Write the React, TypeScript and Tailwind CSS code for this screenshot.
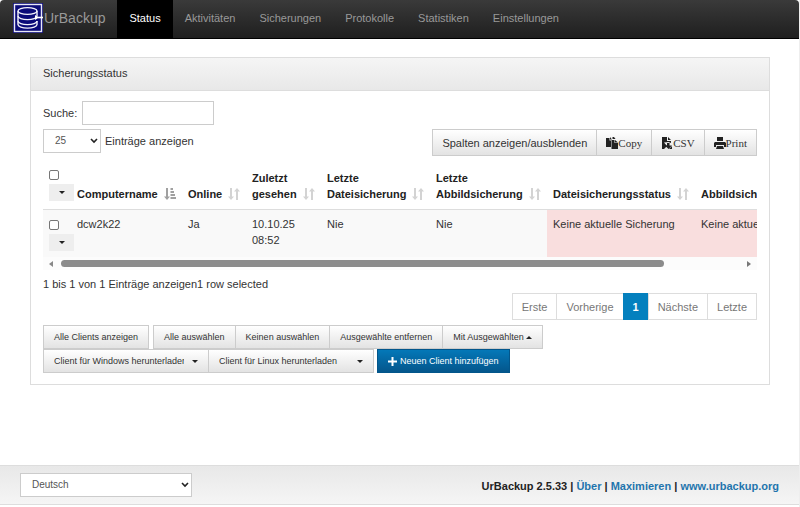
import type { ReactNode } from "react";

const navItems = ["Status", "Aktivitäten", "Sicherungen", "Protokolle", "Statistiken", "Einstellungen"];

const columns = [
  { label: "Computername", cell: "dcw2k22", width: "w-[111px]" },
  { label: "Online", cell: "Ja", width: "w-[64px]" },
  { label: "Zuletzt gesehen", cell: "10.10.25 08:52", width: "w-[75px]" },
  { label: "Letzte Dateisicherung", cell: "Nie", width: "w-[109px]" },
  { label: "Letzte Abbildsicherung", cell: "Nie", width: "w-[117px]" },
  { label: "Dateisicherungsstatus", cell: "Keine aktuelle Sicherung", width: "w-[148px]", alert: true },
  { label: "Abbildsicherungsstatus", cell: "Keine aktuelle Sicherung", width: "w-[152px]", alert: true },
];

function Logo() {
  return (
    <svg viewBox="0 0 30 30" className="size-[30px]" aria-hidden="true">
      <rect width="30" height="30" fill="#0b0b78" />
      <rect x="1.5" y="1.5" width="27" height="27" fill="none" stroke="#e8e8f4" strokeWidth="1.4" />
      <g fill="none" stroke="#f2f2fa" strokeWidth="1.4">
        <ellipse cx="14.5" cy="8" rx="9.5" ry="3.4" />
        <path d="M5 8v5c0 2 4.300 3.600 9.500 3.600S24 15 24 13V8" />
        <path d="M5 13v5c0 2 4.300 3.600 9.500 3.600S24 20 24 18" />
        <path d="M5 18v3.500c0 2 4.300 3.600 9.500 3.600S24 23.500 24 21.500V18" />
      </g>
      <path d="M22 12v5l4-2.500z" fill="#fff" />
      <path d="M25 14.500h5" stroke="#fff" strokeWidth="1.6" />
    </svg>
  );
}

function SortIcon() {
  return (
    <svg viewBox="0 0 12 12" className="size-3 shrink-0 fill-[#d3d3d3]" aria-hidden="true">
      <path d="M2 0h2v8.500h2L3 12 0 8.500h2zM8 12h2V3.500h2L9 0 6 3.500h2z" />
    </svg>
  );
}

function SortedIcon() {
  return (
    <svg viewBox="0 0 12 12" className="size-3 shrink-0 fill-[#a0a0a0]" aria-hidden="true">
      <path d="M2 0h2v8.500h2L3 12 0 8.500h2zM6.500 0H9v2H6.500zM6.500 3H10v2H6.500zM6.500 6H11v2H6.500zM6.500 9H12v2H6.500z" />
    </svg>
  );
}

function Chevron() {
  return (
    <svg viewBox="0 0 8 6" className="pointer-events-none absolute right-[3px] top-1/2 h-[6px] w-2 -translate-y-1/2" aria-hidden="true">
      <path d="M1 1l3 3 3-3" fill="none" stroke="#222" strokeWidth="1.6" />
    </svg>
  );
}

function Caret({ up = false }: { up?: boolean }) {
  return (
    <svg viewBox="0 0 6 3" className="h-[3px] w-[6px] shrink-0 fill-[#222]" aria-hidden="true">
      <path d={up ? "M0 3L3 0l3 3z" : "M0 0h6L3 3z"} />
    </svg>
  );
}

function CopyIcon() {
  return (
    <svg viewBox="0 0 12 12" className="size-3 fill-[#222]" aria-hidden="true">
      <path d="M0 1h3.500v2.500H5V10H0zM4 0l2 2.500H4z" />
      <path d="M5.500 3h3v3H12v6H5.500zM9 3l3 2.500H9zM6.500 0H8l1.500 2h-3z" />
    </svg>
  );
}

function CsvIcon() {
  return (
    <svg viewBox="0 0 12 12" className="size-3 fill-[#222]" aria-hidden="true">
      <path d="M1 0h5v4h4v2L7.500 5 3 5.500 6 9 3 12H1zM7 0l3 3H7z" />
      <path d="M6 6h2.500v2.500H11L7.500 12 4 8.500h2z" />
      <path d="M9 11l2-2v3H8z" />
    </svg>
  );
}

function PrintIcon() {
  return (
    <svg viewBox="0 0 12 12" className="size-3 fill-[#222]" aria-hidden="true">
      <path d="M3 0h6v4H3zM1 5h10l1 1v4h-2V8H2v2H0V6zM3 9h6l1 3H2z" />
    </svg>
  );
}

function ExportButton({ icon, children }: { icon: ReactNode; children: ReactNode }) {
  return (
    <button className="-ml-px flex h-[27px] items-center border border-[#ccc] bg-linear-to-b from-white to-[#e3e3e3] px-[9px] font-['Liberation_Serif',serif]">
      {icon}
      {children}
    </button>
  );
}

function SmallButton({ children }: { children: ReactNode }) {
  return (
    <button className="-ml-px flex h-6 items-center gap-[2px] whitespace-nowrap border border-[#ccc] bg-linear-to-b from-white to-[#e3e3e3] px-[10px]">
      {children}
    </button>
  );
}

function DownloadSelect({ label }: { label: string }) {
  return (
    <div className="relative -ml-px w-[166px]">
      <select aria-label={label} className="block h-6 w-full appearance-none border border-[#ccc] bg-linear-to-b from-white to-[#e3e3e3] pl-[10px] pr-6">
        <option>{label}</option>
      </select>
      <span className="pointer-events-none absolute inset-y-0 right-[11px] flex items-center">
        <Caret />
      </span>
    </div>
  );
}

function RowSelector({ label }: { label: string }) {
  return (
    <div className="flex flex-col items-start gap-1">
      <input type="checkbox" aria-label={label} className="block size-[10px] appearance-none rounded-[2px] border border-[#767676] bg-white" />
      <button aria-label={label + ": Menü"} className="flex h-[17px] w-[25px] items-center justify-center bg-[#eee]">
        <Caret />
      </button>
    </div>
  );
}

export default function App() {
  return (
    <div className="flex min-h-screen flex-col border-r border-[#eee] bg-white font-['Liberation_Sans',Arial,sans-serif] text-[11px] leading-4 text-[#333]">
      <nav className="flex h-[39px] rounded-t-[4px] border-b border-black bg-linear-to-b from-[#3a3a3a] to-[#1f1f1f] text-[#999]">
        <a href="#home" className="flex items-center gap-px pb-[2px] pl-[13px] pr-3 text-[14px]">
          <Logo />
          UrBackup
        </a>
        {navItems.map((item, i) => (
          <a
            key={item}
            href={"#" + item}
            className={i === 0 ? "flex items-center bg-black px-3 pb-[2px] text-white" : "flex items-center px-3 pb-[2px]"}
          >
            {item}
          </a>
        ))}
      </nav>

      <main className="flex-1 pl-[30px] pr-[29px] pt-[18px]">
        <section className="border border-[#ddd]">
          <h1 className="border-b border-[#ddd] bg-linear-to-b from-[#f5f5f5] to-[#e8e8e8] px-3 pb-[9px] pt-[7px]">Sicherungsstatus</h1>
          <div className="px-3 pb-[11px] pt-[10px]">
            <div className="flex items-center gap-[5px]">
              <label htmlFor="search">Suche:</label>
              <input id="search" type="text" className="h-6 w-[132px] border border-[#ccc] px-2" />
            </div>

            <div className="mt-1 flex items-start justify-between">
              <label className="flex items-center gap-1">
                <span className="relative w-[58px]">
                  <select className="block h-6 w-full appearance-none border border-[#ccc] bg-white pl-[11px] text-[10px] text-[#555]">
                    <option>25</option>
                  </select>
                  <Chevron />
                </span>
                Einträge anzeigen
              </label>
              <div className="flex">
                <button className="h-[27px] border border-[#ccc] bg-linear-to-b from-white to-[#e3e3e3] px-[9px]">
                  Spalten anzeigen/ausblenden
                </button>
                <ExportButton icon={<CopyIcon />}>Copy</ExportButton>
                <ExportButton icon={<CsvIcon />}>CSV</ExportButton>
                <ExportButton icon={<PrintIcon />}>Print</ExportButton>
              </div>
            </div>

            <div className="mt-2 overflow-hidden">
              <table className="w-[804px] table-fixed text-left">
                <thead>
                  <tr className="h-[45px] border-b border-[#ddd] text-[#222]">
                    <th className="w-[28px] pl-[6px] pt-[6px] align-top">
                      <RowSelector label="Alle auswählen" />
                    </th>
                    {columns.map((c, i) => (
                      <th key={c.label} className={c.width + " px-[6px] pb-[7px] align-bottom"}>
                        <div className="flex items-end justify-between">
                          {c.label}
                          <span className="pb-[2px]">{i === 0 ? <SortedIcon /> : <SortIcon />}</span>
                        </div>
                      </th>
                    ))}
                  </tr>
                </thead>
                <tbody>
                  <tr className="h-[48px] bg-[#f9f9f9]">
                    <td className="pl-[6px] pt-[10px] align-top">
                      <RowSelector label="dcw2k22" />
                    </td>
                    {columns.map((c) => (
                      <td key={c.label} className={c.alert ? "bg-[#f9dede] px-[6px] pt-[6px] align-top" : "px-[6px] pt-[6px] align-top"}>
                        {c.cell}
                      </td>
                    ))}
                  </tr>
                </tbody>
              </table>
            </div>
            <div className="flex h-[13px] items-center gap-2 bg-[#fcfcfc] px-[6px]">
              <svg viewBox="0 0 4 6" className="h-[6px] w-1 fill-[#888]" aria-hidden="true">
                <path d="M4 0v6L0 3z" />
              </svg>
              <div className="flex-1">
                <div className="h-[7px] w-[89%] rounded-full bg-[#8b8b8b]" />
              </div>
              <svg viewBox="0 0 4 6" className="h-[6px] w-1 fill-[#777]" aria-hidden="true">
                <path d="M0 0v6l4-3z" />
              </svg>
            </div>

            <p className="mt-[6px]">1 bis 1 von 1 Einträge anzeigen1 row selected</p>

            <div className="mt-px flex justify-end text-[#777]">
              <button className="h-[27px] border border-[#ddd] px-[9px]">Erste</button>
              <button className="-ml-px h-[27px] border border-[#ddd] px-[9px]">Vorherige</button>
              <button className="-ml-px h-[27px] border border-[#0480be] bg-[#0480be] px-[9px] font-bold text-white">1</button>
              <button className="-ml-px h-[27px] border border-[#ddd] px-[9px]">Nächste</button>
              <button className="-ml-px h-[27px] border border-[#ddd] px-[9px]">Letzte</button>
            </div>

            <div className="mt-[5px] pl-px text-[9px]">
              <div className="flex gap-[5px]">
                <SmallButton>Alle Clients anzeigen</SmallButton>
                <div className="flex">
                  <SmallButton>Alle auswählen</SmallButton>
                  <SmallButton>Keinen auswählen</SmallButton>
                  <SmallButton>Ausgewählte entfernen</SmallButton>
                  <SmallButton>
                    Mit Ausgewählten <Caret up />
                  </SmallButton>
                </div>
              </div>
              <div className="flex">
                <DownloadSelect label="Client für Windows herunterladen" />
                <DownloadSelect label="Client für Linux herunterladen" />
                <button className="ml-[3px] flex h-6 items-center gap-[3px] border border-[#02568b] bg-linear-to-b from-[#0478b8] to-[#04568c] px-[10px] text-white">
                  <svg viewBox="0 0 9 9" className="size-[9px] fill-white" aria-hidden="true">
                    <path d="M3.500 0h2v3.500H9v2H5.500V9h-2V5.500H0v-2h3.500z" />
                  </svg>
                  Neuen Client hinzufügen
                </button>
              </div>
            </div>
          </div>
        </section>
      </main>

      <footer className="mb-[2px] flex h-10 items-center justify-between border-y border-[#ddd] bg-linear-to-b from-[#e8e8e8] to-[#f5f5f5] px-5 font-bold text-[#222]">
        <div className="relative w-[172px] font-normal">
          <select aria-label="Sprache" className="block h-6 w-full appearance-none border border-[#ccc] bg-white pl-[11px] text-[10px] text-[#555]">
            <option>Deutsch</option>
          </select>
          <Chevron />
        </div>
        <p className="pt-[2px]">
          UrBackup 2.5.33 | <a href="#about" className="text-[#1f75ad]">Über</a> |{" "}
          <a href="#maximize" className="text-[#1f75ad]">Maximieren</a> |{" "}
          <a href="#site" className="text-[#1f75ad]">www.urbackup.org</a>
        </p>
      </footer>
    </div>
  );
}
